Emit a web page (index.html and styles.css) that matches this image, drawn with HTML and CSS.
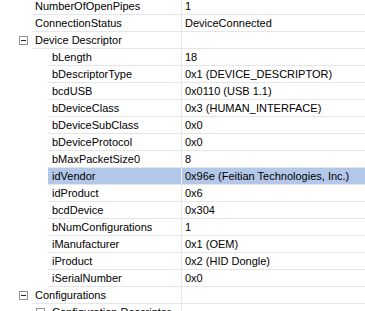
FILE: index.html
```html
<!DOCTYPE html>
<html lang="en">
<head>
    <meta charset="UTF-8">
    <title>Device Properties</title>
    <link rel="stylesheet" href="styles.css">
</head>
<body>
    <div class="grid">
        <div class="row">
            <div class="gutter lvl1"></div>
            <div class="cells"><span class="name">NumberOfOpenPipes</span><span class="value">1</span></div>
        </div>
        <div class="row">
            <div class="gutter lvl1"></div>
            <div class="cells"><span class="name">ConnectionStatus</span><span class="value">DeviceConnected</span></div>
        </div>
        <div class="row">
            <div class="gutter lvl1"><span class="toggle"></span></div>
            <div class="cells"><span class="name">Device Descriptor</span><span class="value"></span></div>
        </div>
        <div class="row">
            <div class="gutter lvl2"></div>
            <div class="cells"><span class="name">bLength</span><span class="value">18</span></div>
        </div>
        <div class="row">
            <div class="gutter lvl2"></div>
            <div class="cells"><span class="name">bDescriptorType</span><span class="value">0x1 (DEVICE_DESCRIPTOR)</span></div>
        </div>
        <div class="row">
            <div class="gutter lvl2"></div>
            <div class="cells"><span class="name">bcdUSB</span><span class="value">0x0110 (USB 1.1)</span></div>
        </div>
        <div class="row">
            <div class="gutter lvl2"></div>
            <div class="cells"><span class="name">bDeviceClass</span><span class="value">0x3 (HUMAN_INTERFACE)</span></div>
        </div>
        <div class="row">
            <div class="gutter lvl2"></div>
            <div class="cells"><span class="name">bDeviceSubClass</span><span class="value">0x0</span></div>
        </div>
        <div class="row">
            <div class="gutter lvl2"></div>
            <div class="cells"><span class="name">bDeviceProtocol</span><span class="value">0x0</span></div>
        </div>
        <div class="row">
            <div class="gutter lvl2"></div>
            <div class="cells"><span class="name">bMaxPacketSize0</span><span class="value">8</span></div>
        </div>
        <div class="row selected">
            <div class="gutter lvl2"></div>
            <div class="cells"><span class="name">idVendor</span><span class="value">0x96e (Feitian Technologies, Inc.)</span></div>
        </div>
        <div class="row">
            <div class="gutter lvl2"></div>
            <div class="cells"><span class="name">idProduct</span><span class="value">0x6</span></div>
        </div>
        <div class="row">
            <div class="gutter lvl2"></div>
            <div class="cells"><span class="name">bcdDevice</span><span class="value">0x304</span></div>
        </div>
        <div class="row">
            <div class="gutter lvl2"></div>
            <div class="cells"><span class="name">bNumConfigurations</span><span class="value">1</span></div>
        </div>
        <div class="row">
            <div class="gutter lvl2"></div>
            <div class="cells"><span class="name">iManufacturer</span><span class="value">0x1 (OEM)</span></div>
        </div>
        <div class="row">
            <div class="gutter lvl2"></div>
            <div class="cells"><span class="name">iProduct</span><span class="value">0x2 (HID Dongle)</span></div>
        </div>
        <div class="row">
            <div class="gutter lvl2"></div>
            <div class="cells"><span class="name">iSerialNumber</span><span class="value">0x0</span></div>
        </div>
        <div class="row">
            <div class="gutter lvl1"><span class="toggle"></span></div>
            <div class="cells"><span class="name">Configurations</span><span class="value"></span></div>
        </div>
        <div class="row">
            <div class="gutter lvl2"><span class="toggle"></span></div>
            <div class="cells"><span class="name">Configuration Descriptor</span><span class="value"></span></div>
        </div>
    </div>
</body>
</html>
```

FILE: styles.css
```css
body {
    margin: 0;
    background-color: white;
    font-family: "Liberation Sans", Arial, sans-serif;
    font-size: 11px;
    color: #000;
    overflow: hidden;
}

.grid {
    margin-top: -2px;
}

.row {
    display: flex;
    height: 17px;
}

.gutter {
    flex: none;
    display: flex;
    align-items: center;
    justify-content: flex-end;
    box-sizing: border-box;
}

.gutter.lvl1 {
    width: 32px;
    padding-right: 4px;
}

.gutter.lvl2 {
    width: 48px;
    padding-right: 3px;
}

.toggle {
    position: relative;
    width: 9px;
    height: 9px;
    box-sizing: border-box;
    border: 1px solid #8e8f8f;
    background-color: white;
}

.toggle::after {
    content: "";
    position: absolute;
    left: 1px;
    top: 3px;
    width: 5px;
    height: 1px;
    background-color: #222;
}

.cells {
    flex: 1;
    display: flex;
    border-bottom: 1px solid #e6e6e6;
}

.name {
    flex: none;
    box-sizing: border-box;
    line-height: 16px;
    padding-left: 3px;
    border-right: 1px solid #e6e6e6;
    white-space: nowrap;
    overflow: hidden;
}

.lvl1 + .cells .name {
    width: 150px;
}

.lvl2 + .cells .name {
    width: 134px;
    padding-left: 4px;
}

.value {
    flex: 1;
    line-height: 16px;
    padding-left: 3px;
    white-space: nowrap;
}

.row.selected .cells {
    background-color: #b3c7e9;
}

.row.selected .name {
    border-right-color: #f0f4fa;
}
```
